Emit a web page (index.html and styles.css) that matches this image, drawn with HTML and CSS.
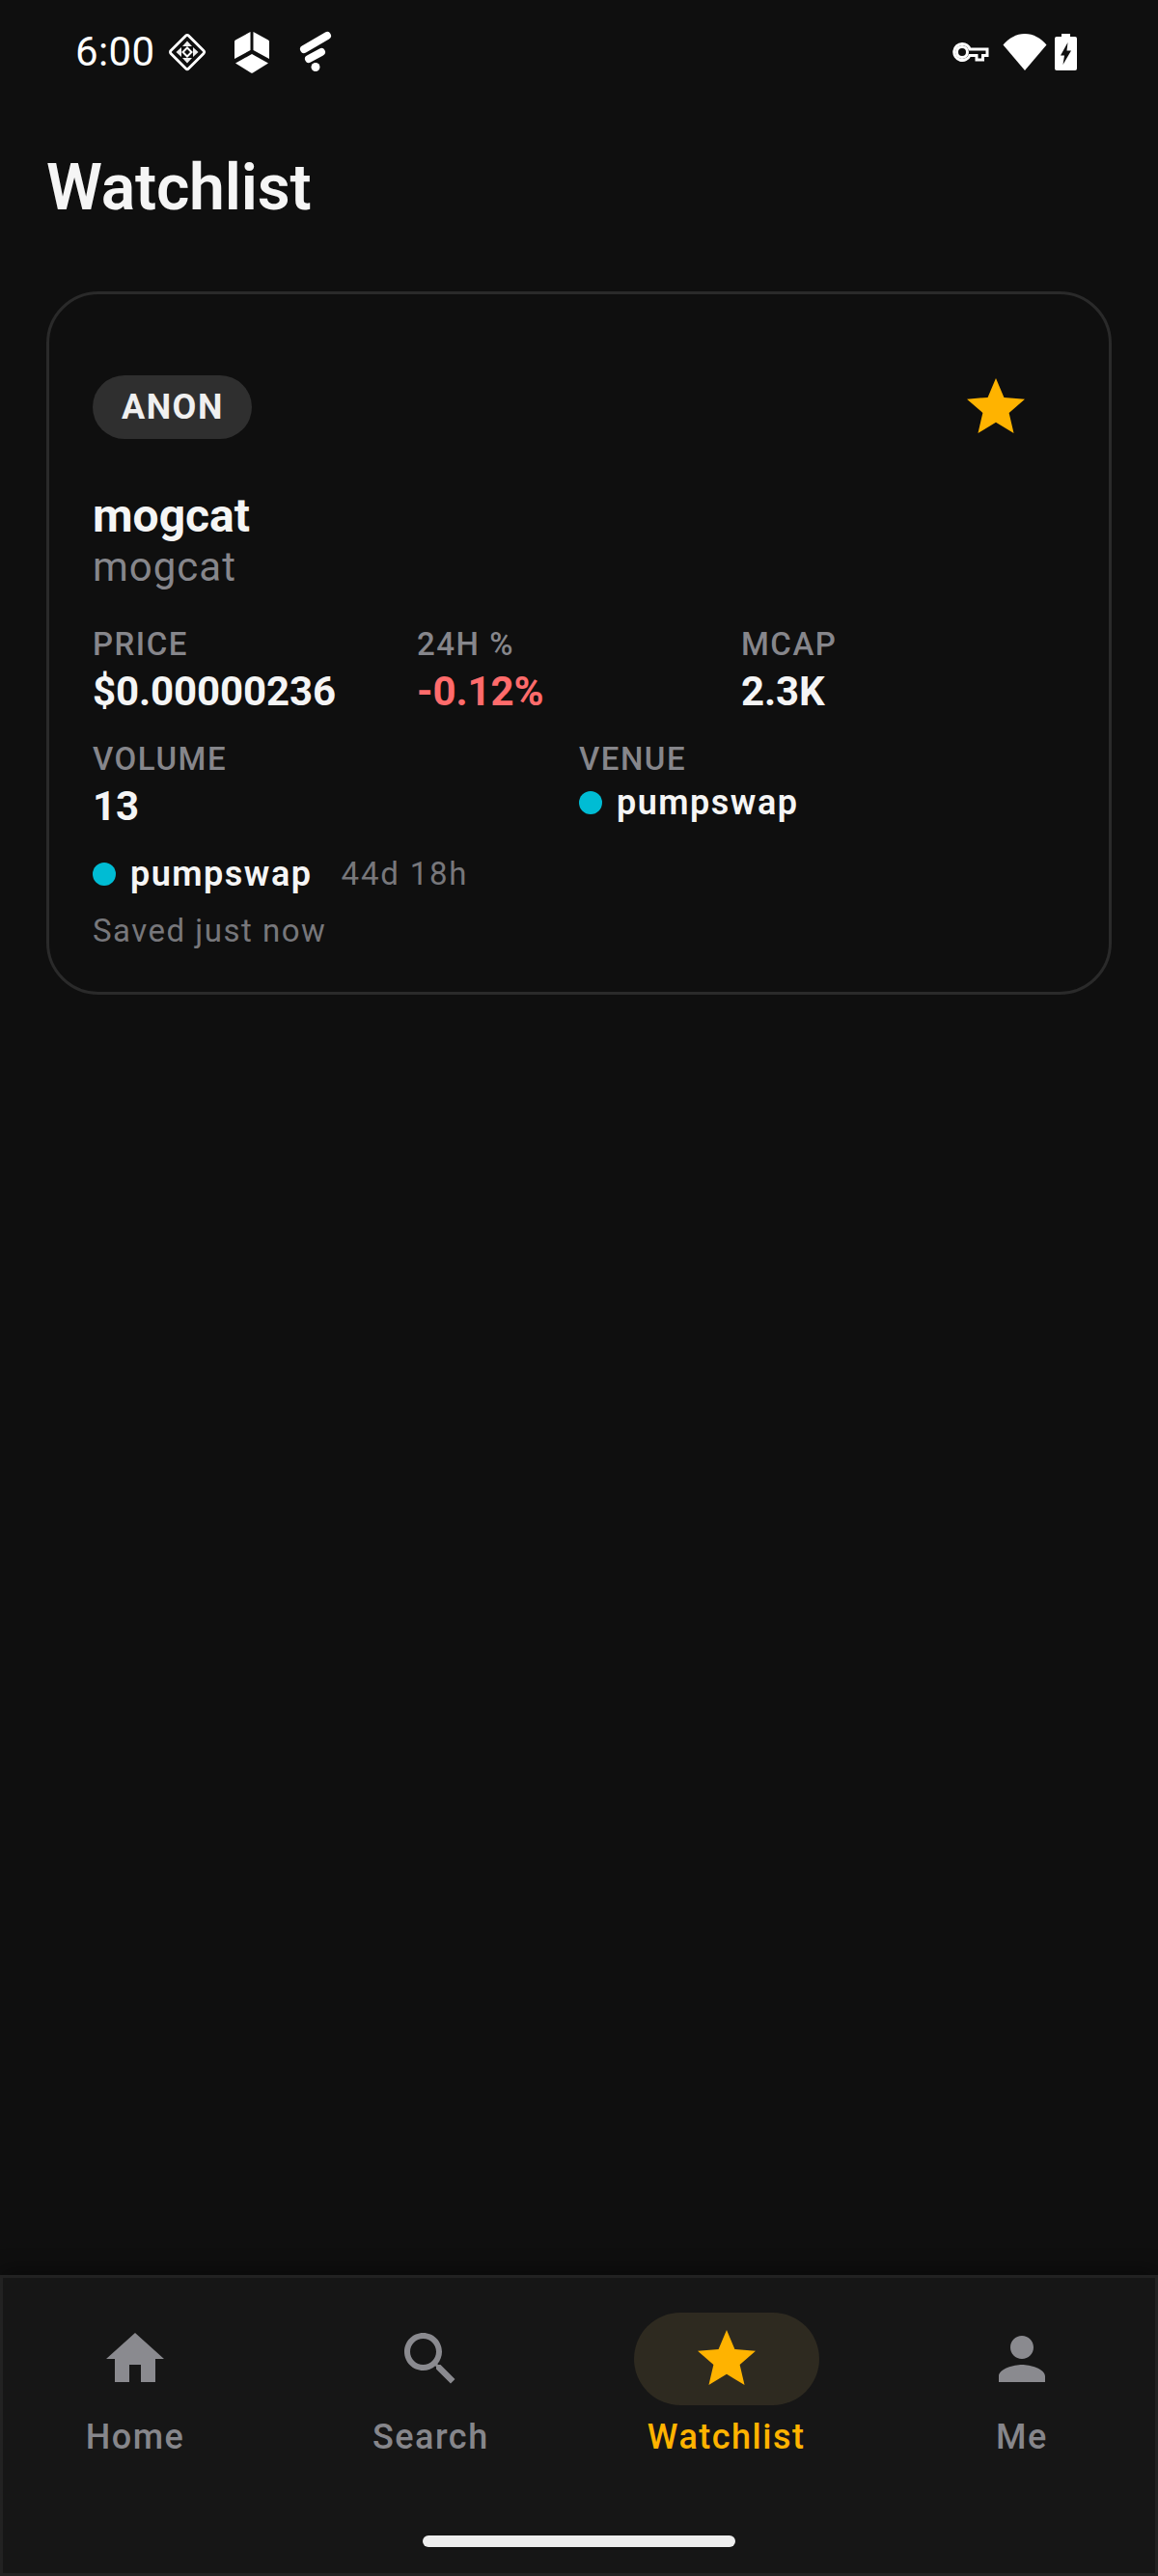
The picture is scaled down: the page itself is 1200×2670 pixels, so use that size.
FILE: index.html
```html
<!DOCTYPE html>
<html lang="en">
<head>
    <meta charset="UTF-8">
    <title>Watchlist</title>
    <link rel="stylesheet" href="styles.css">
</head>
<body>
<div class="screen">
    <div class="statusbar">
        <div class="status-left">
            <span class="time">6:00</span>
            <svg class="ic-diamond" width="44" height="44" viewBox="0 0 44 44">
                <rect x="9" y="9" width="26" height="26" rx="2" transform="rotate(45 22 22)" fill="none" stroke="#fff" stroke-width="2.800"/>
                <path d="M22 10.500l5 5.500H17zM22 33.500l-5-5.500h10zM33.500 22l-5.500 5V17zM10.500 22l5.500-5v10z" fill="#eee"/>
                <path d="M22 17.500l4.500 4.500-4.500 4.500-4.500-4.500z" fill="none" stroke="#fff" stroke-width="2"/>
            </svg>
            <svg class="ic-cube" width="40" height="44" viewBox="0 0 40 44">
                <path d="M18.500 1L3 9.500Q2 10 2 11V29L18.500 20z" fill="#fff"/>
                <path d="M21.500 1L37 9.500Q38 10 38 11V29L21.500 20z" fill="#fff"/>
                <path d="M20 24L37 33.500 21 43.500Q20 44 19 43.500L3 33.500z" fill="#fff"/>
            </svg>
            <svg class="ic-flick" width="36" height="46" viewBox="0 0 36 46">
                <path d="M6 20L30 6M11 30L24 23" fill="none" stroke="#fff" stroke-width="8" stroke-linecap="round"/>
                <circle cx="18" cy="38.500" r="4.500" fill="#fff"/>
            </svg>
        </div>
        <div class="status-right">
            <svg class="ic-key" width="38" height="20" viewBox="0 0 38 20">
                <path d="M10 1.500a8.500 8.500 0 0 1 8 5.500H36v6.500h-4.500V18H25v-4.500h-7a8.500 8.500 0 1 1-8-12z" fill="none" stroke="#fff" stroke-width="3"/>
                <circle cx="10" cy="10" r="5.500" fill="none" stroke="#fff" stroke-width="3"/>
            </svg>
            <svg class="ic-wifi" width="46" height="38" viewBox="0 0 46 38">
                <path d="M23 38L0.500 11.500C6.500 4.500 14 0 23 0s16.500 4.500 22.500 11.500z" fill="#fff"/>
            </svg>
            <svg class="ic-batt" width="23" height="38" viewBox="0 0 23 38">
                <path d="M7 0h9v3h5q2 0 2 2v31q0 2-2 2H2q-2 0-2-2V5q0-2 2-2h5z" fill="#fff"/>
                <path d="M13.500 9L6 22.500h4L8.500 32 17 17.500h-4.500z" fill="#0f0f0f"/>
            </svg>
        </div>
    </div>

    <h1 class="page-title">Watchlist</h1>

    <div class="card">
        <div class="card-top">
            <span class="tag">ANON</span>
            <svg class="star-btn" width="72" height="72" viewBox="0 0 24 24">
                <path d="M12 17.270L18.180 21l-1.640-7.030L22 9.240l-7.190-.610L12 2 9.190 8.630 2 9.240l5.460 4.730L5.820 21z"/>
            </svg>
        </div>
        <div class="name">mogcat</div>
        <div class="symbol">mogcat</div>

        <div class="stats stats-3">
            <div>
                <div class="label">PRICE</div>
                <div class="value">$0.00000236</div>
            </div>
            <div>
                <div class="label">24H %</div>
                <div class="value neg">-0.12%</div>
            </div>
            <div>
                <div class="label">MCAP</div>
                <div class="value">2.3K</div>
            </div>
        </div>
        <div class="stats stats-2">
            <div>
                <div class="label">VOLUME</div>
                <div class="value">13</div>
            </div>
            <div>
                <div class="label">VENUE</div>
                <div class="venue"><span class="dot"></span><span class="venue-name">pumpswap</span></div>
            </div>
        </div>

        <div class="venue-row">
            <div class="venue"><span class="dot"></span><span class="venue-name">pumpswap</span></div>
            <span class="age">44d 18h</span>
        </div>
        <div class="saved">Saved just now</div>
    </div>

    <div class="spacer"></div>

    <div class="navbar">
        <div class="nav-items">
            <div class="nav-item">
                <div class="nav-icon">
                    <svg width="72" height="72" viewBox="0 0 24 24"><path d="M10 20v-6h4v6h5v-8h3L12 3 2 12h3v8z"/></svg>
                </div>
                <div class="nav-label">Home</div>
            </div>
            <div class="nav-item">
                <div class="nav-icon">
                    <svg width="72" height="72" viewBox="0 0 24 24"><path d="M15.500 14h-.790l-.280-.270C15.410 12.590 16 11.110 16 9.500 16 5.910 13.090 3 9.500 3S3 5.910 3 9.500 5.910 16 9.500 16c1.610 0 3.090-.590 4.230-1.570l.270.280v.790l5 4.990L20.490 19l-4.990-5zm-6 0C7.010 14 5 11.990 5 9.500S7.010 5 9.500 5 14 7.010 14 9.500 11.990 14 9.500 14z"/></svg>
                </div>
                <div class="nav-label">Search</div>
            </div>
            <div class="nav-item active">
                <div class="nav-icon">
                    <svg width="72" height="72" viewBox="0 0 24 24"><path d="M12 17.270L18.180 21l-1.640-7.030L22 9.240l-7.190-.610L12 2 9.190 8.630 2 9.240l5.460 4.730L5.820 21z"/></svg>
                </div>
                <div class="nav-label">Watchlist</div>
            </div>
            <div class="nav-item">
                <div class="nav-icon">
                    <svg width="72" height="72" viewBox="0 0 24 24"><path d="M12 12c2.210 0 4-1.790 4-4s-1.790-4-4-4-4 1.790-4 4 1.790 4 4 4zm0 2c-2.670 0-8 1.340-8 4v2h16v-2c0-2.660-5.330-4-8-4z"/></svg>
                </div>
                <div class="nav-label">Me</div>
            </div>
        </div>
        <div class="home-bar"></div>
    </div>
</div>
</body>
</html>
```
FILE: styles.css
```css
* {
    box-sizing: border-box;
}
body {
    margin: 0;
    background: #0f0f0f;
    color: #f5f5f5;
    font-family: Roboto, "Liberation Sans", sans-serif;
}
.screen {
    display: flex;
    flex-direction: column;
    width: 1200px;
    height: 2670px;
    overflow: hidden;
}

/* status bar */
.statusbar {
    display: flex;
    justify-content: space-between;
    align-items: center;
    height: 108px;
    padding: 0 84px 0 78px;
    flex-shrink: 0;
}
.status-left,
.status-right {
    display: flex;
    align-items: center;
}
.time {
    font-size: 42px;
    line-height: 50px;
    letter-spacing: 0.4px;
    color: #fff;
}
.ic-diamond {
    margin-left: 11px;
}
.ic-cube {
    margin-left: 25px;
}
.ic-flick {
    margin-left: 28px;
}
.ic-wifi {
    margin-left: 14px;
}
.ic-batt {
    margin-left: 8px;
}

.page-title {
    margin: 48px 0 68px 48px;
    font-size: 66px;
    line-height: 78px;
    font-weight: 600;
    letter-spacing: -0.2px;
}

/* card */
.card {
    margin: 0 48px;
    padding: 81px 45px 44px;
    border: 3px solid #2a2a2a;
    border-radius: 54px;
}
.card-top {
    display: flex;
    justify-content: space-between;
    align-items: center;
    height: 72px;
    padding-right: 36px;
}
.tag {
    display: flex;
    align-items: center;
    height: 66px;
    padding: 0 29px 0 30px;
    border-radius: 33px;
    background: #2f2f2f;
    font-size: 36px;
    font-weight: 700;
    letter-spacing: 1.5px;
    color: #f0f0f0;
}
.star-btn path {
    fill: #ffb300;
}
.name {
    margin-top: 49px;
    font-size: 48px;
    line-height: 56px;
    font-weight: 700;
}
.symbol {
    font-size: 42px;
    line-height: 50px;
    letter-spacing: 1px;
    color: #86868b;
}
.stats {
    display: grid;
}
.stats-3 {
    grid-template-columns: repeat(3, 1fr);
    margin-top: 36px;
}
.stats-2 {
    grid-template-columns: repeat(2, 1fr);
    margin-top: 26px;
}
.label {
    font-size: 33px;
    line-height: 38px;
    font-weight: 500;
    letter-spacing: 1.5px;
    color: #86868b;
}
.value {
    margin-top: 5px;
    font-size: 42px;
    line-height: 50px;
    font-weight: 700;
    letter-spacing: -0.1px;
}
.neg {
    color: #ff6b6b;
}
.venue {
    display: flex;
    align-items: center;
}
.stats-2 .venue {
    margin-top: 5px;
}
.dot {
    width: 24px;
    height: 24px;
    margin-right: 15px;
    border-radius: 50%;
    background: #00bcd4;
}
.venue-name {
    font-size: 36px;
    line-height: 42px;
    font-weight: 600;
    letter-spacing: 1.5px;
}
.venue-row {
    display: flex;
    align-items: center;
    margin-top: 24px;
}
.age {
    margin-left: 30px;
    font-size: 33px;
    line-height: 42px;
    letter-spacing: 1.8px;
    color: #77777b;
}
.saved {
    margin-top: 19px;
    font-size: 33px;
    line-height: 38px;
    letter-spacing: 1.5px;
    color: #77777b;
}

.spacer {
    flex: 1;
}

/* bottom nav */
.navbar {
    position: relative;
    height: 312px;
    flex-shrink: 0;
    padding-top: 36px;
    border: 3px solid #222;
    background: #161616;
    box-shadow: 0 -6px 18px rgba(0, 0, 0, 0.35);
}
.nav-items {
    display: flex;
    justify-content: space-between;
    padding: 0 42px 0 41px;
}
.nav-item {
    display: flex;
    flex-direction: column;
    align-items: center;
    width: 192px;
    color: #86868b;
}
.nav-icon {
    display: flex;
    justify-content: center;
    align-items: center;
    width: 192px;
    height: 96px;
    border-radius: 48px;
}
.nav-icon svg {
    fill: #8a8a8f;
}
.nav-label {
    margin-top: 12px;
    font-size: 36px;
    line-height: 42px;
    font-weight: 500;
    letter-spacing: 1.5px;
    white-space: nowrap;
}
.nav-item.active {
    color: #ffb300;
}
.nav-item.active .nav-icon {
    background: #2e2a20;
}
.nav-item.active .nav-icon svg {
    fill: #ffb300;
}
.home-bar {
    position: absolute;
    left: 435px;
    bottom: 27px;
    width: 324px;
    height: 12px;
    border-radius: 6px;
    background: #eee;
}
```
